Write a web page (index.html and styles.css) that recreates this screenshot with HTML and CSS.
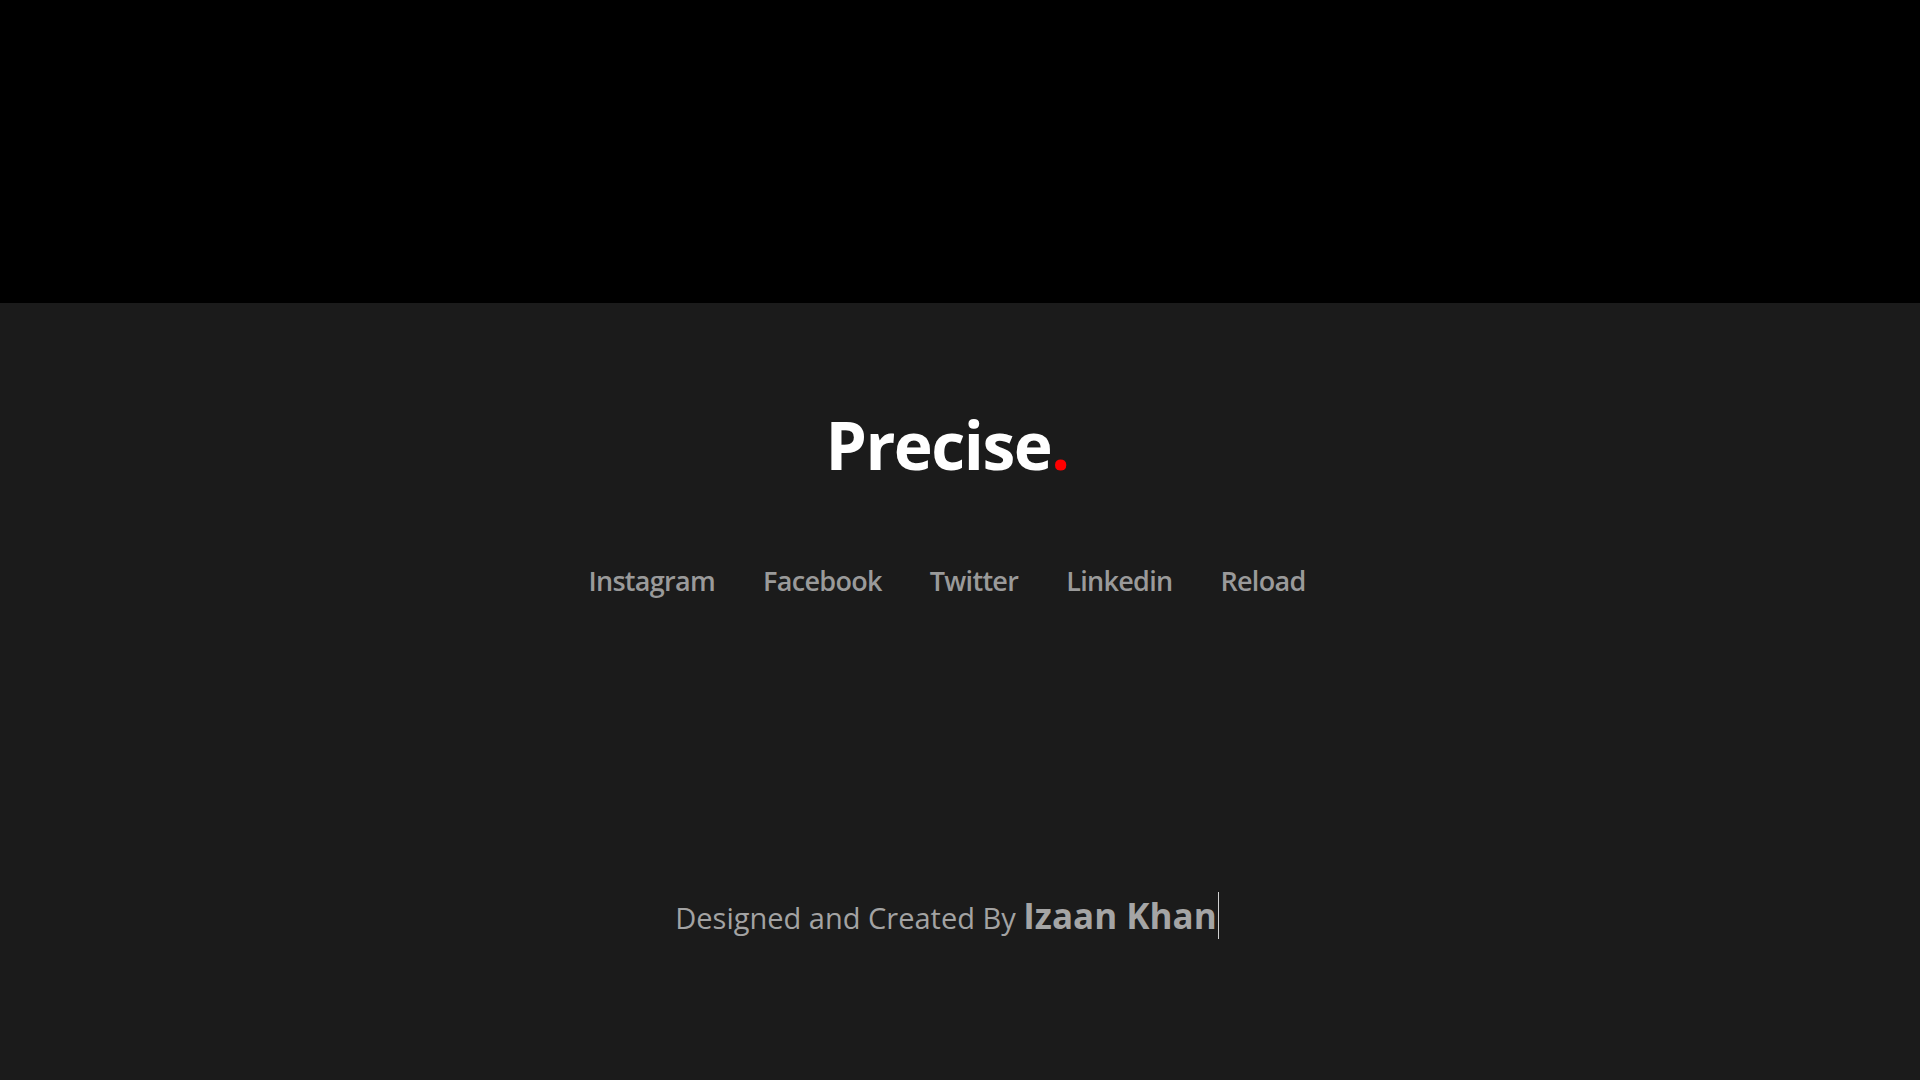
FILE: index.html
```html
<!DOCTYPE html>
<html lang="en">
<head>
<meta charset="utf-8">
<title>Precise</title>
<link rel="stylesheet" href="styles.css">
</head>
<body>
<section class="hero"></section>
<footer class="footer">
  <h1 class="brand">Precise<span class="dot">.</span></h1>
  <nav class="links">
    <a href="#">Instagram</a>
    <a href="#">Facebook</a>
    <a href="#">Twitter</a>
    <a href="#">Linkedin</a>
    <a href="#">Reload</a>
  </nav>
  <p class="credit">Designed and Created By <strong class="name">Izaan Khan</strong></p>
</footer>
</body>
</html>
```
FILE: styles.css
```css
* { box-sizing: border-box; }
html, body { margin: 0; padding: 0; }
body {
  background: #1b1b1b;
  font-family: "Open Sans", "Lato", sans-serif;
  height: 1080px;
  overflow: hidden;
}
.hero {
  height: 303px;
  background: #000;
}
.footer {
  height: 777px;
  background: #1b1b1b;
  display: flex;
  flex-direction: column;
  align-items: center;
  padding-top: 101px;
  padding-right: 26px;
}
.brand {
  margin: 0;
  font-size: 66px;
  font-weight: 700;
  color: #fff;
  line-height: 80px;
  letter-spacing: -1.5px;
}
.dot { color: #ff0000; }
.links {
  margin-top: 80px;
  display: flex;
  gap: 48px;
}
.links a {
  color: #9a9a9a;
  text-decoration: none;
  font-size: 27px;
  font-weight: 600;
  line-height: 34px;
  letter-spacing: -0.7px;
}
.credit {
  margin: 296px 0 0;
  color: #a3a3a3;
  font-size: 29px;
  font-weight: 400;
  line-height: 44px;
}
.name {
  font-size: 35px;
  font-weight: 700;
  color: #a5a5a5;
  padding-right: 1px;
  border-right: 1px solid #d0d0d0;
}
```
